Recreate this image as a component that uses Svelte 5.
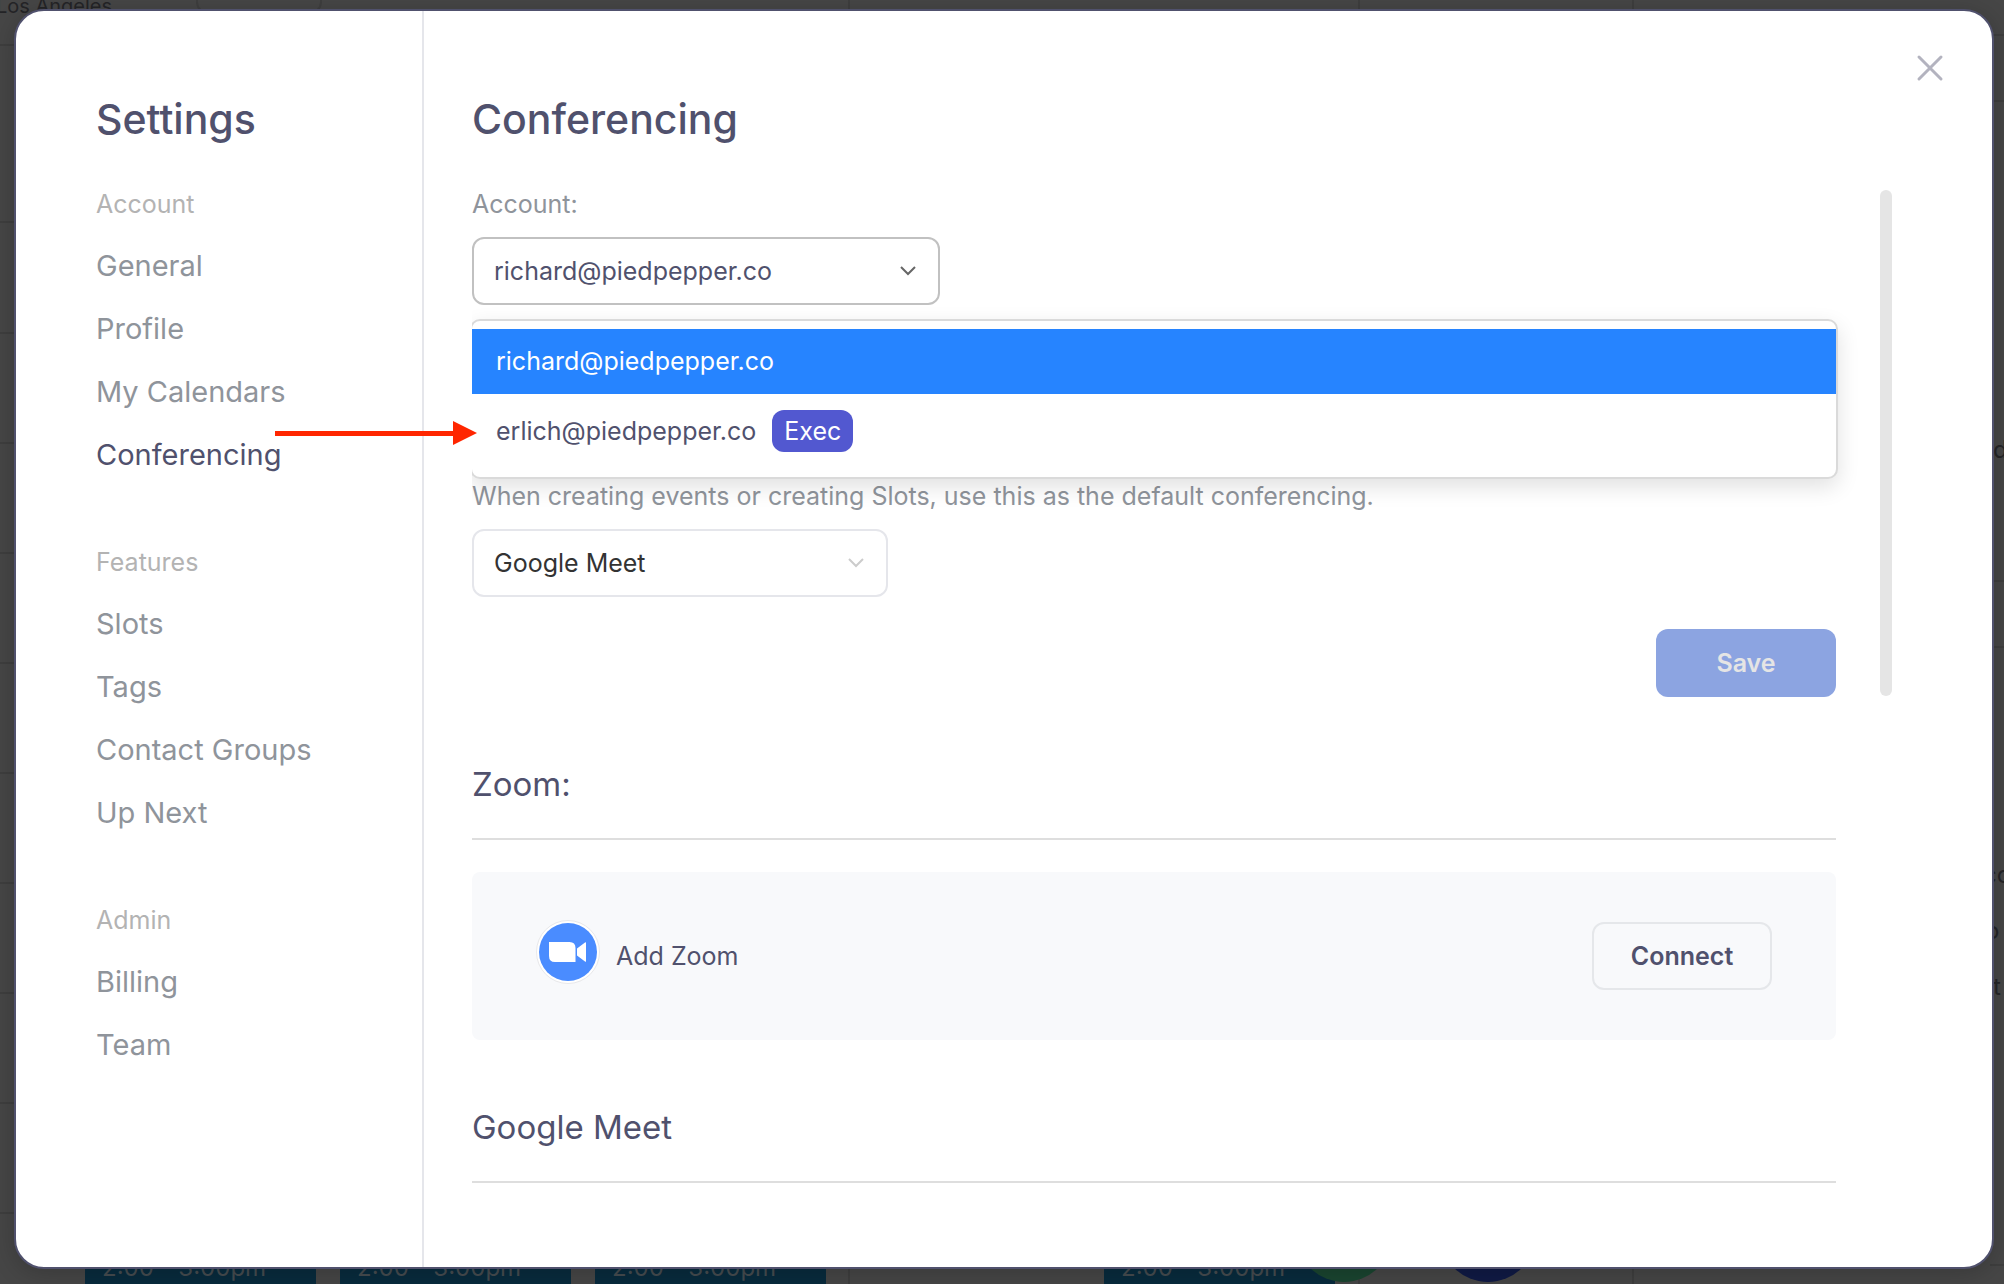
<script>
  const groups = [
    { title: 'Account', items: ['General', 'Profile', 'My Calendars', 'Conferencing'] },
    { title: 'Features', items: ['Slots', 'Tags', 'Contact Groups', 'Up Next'] },
    { title: 'Admin', items: ['Billing', 'Team'] }
  ];
  const slots = [{ x: 85 }, { x: 340 }, { x: 595 }, { x: 1104 }];
  const guests = [
    { x: 1296, color: '#1a4530' },
    { x: 1440, color: '#101a45' }
  ];
  const hours = [44, 221, 332, 442, 552, 662, 772, 882, 992, 1102, 1212];
  const rows = [34, 100, 580, 646, 1264];
  const columns = [848, 1358, 1632];
  const snippets = [
    { x: 1993, y: 434, text: 'd' },
    { x: 1983, y: 859, text: 'co' },
    { x: 1985, y: 915, text: 'o' },
    { x: 1993, y: 971, text: 't' }
  ];
  let active = $state('Conferencing');
  let highlighted = $state(0);
  let conferencing = $state('Google Meet');
</script>

<div class="app">
  <div class="calendar" aria-hidden="true">
    <span class="zone">Los Angeles</span>
    <span class="pill"></span>
    {#each hours as y}<i class="hour" style="top: {y}px"></i>{/each}
    {#each rows as y}<i class="row" style="top: {y}px"></i>{/each}
    {#each columns as x}<i class="column" style="left: {x}px"></i>{/each}
    {#each slots as slot}<span class="slot" style="left: {slot.x}px">2:00 - 3:00pm</span>{/each}
    {#each guests as guest}<i class="guest" style="left: {guest.x}px; background: {guest.color}"></i>{/each}
    {#each snippets as s}<span class="snippet" style="left: {s.x}px; top: {s.y}px">{s.text}</span>{/each}
  </div>

  <div class="modal" role="dialog" aria-label="Settings">
    <aside>
      <h1>Settings</h1>
      <nav>
        {#each groups as group}
          <section>
            <h2>{group.title}</h2>
            {#each group.items as item}
              <a href="#settings" class:active={item === active} onclick={() => (active = item)}>{item}</a>
            {/each}
          </section>
        {/each}
      </nav>
    </aside>

    <main>
      <h1>Conferencing</h1>
      <div class="scroller">
        <div class="settings">
          <label class="label" for="account">Account:</label>
          <div class="picker">
            <button id="account" class="combo" aria-haspopup="listbox" aria-expanded="true">
              <span>richard@piedpepper.co</span>
              <svg width="18" height="12" viewBox="0 0 18 12"><path d="M2 2l7 7 7-7" /></svg>
            </button>
            <div class="menu" role="listbox">
              <button role="option" aria-selected={highlighted === 0} class:on={highlighted === 0} onmouseenter={() => (highlighted = 0)}>richard@piedpepper.co</button>
              <button role="option" class="tall" aria-selected={highlighted === 1} class:on={highlighted === 1} onmouseenter={() => (highlighted = 1)}>erlich@piedpepper.co <span class="tag">Exec</span></button>
            </div>
          </div>
          <label class="label" for="default">When creating events or creating Slots, use this as the default conferencing.</label>
          <div class="select">
            <select id="default" bind:value={conferencing}>
              <option>Google Meet</option>
              <option>Zoom</option>
            </select>
            <svg width="18" height="12" viewBox="0 0 18 12"><path d="M2 2l7 7 7-7" /></svg>
          </div>
          <button class="save">Save</button>
        </div>
        <div class="bar"></div>
      </div>

      <h3>Zoom:</h3>
      <div class="panel">
        <svg class="zoom" width="64" height="64" viewBox="0 0 64 64">
          <circle cx="32" cy="32" r="31.5" fill="#fff" stroke="#e8e8ea" />
          <circle cx="32" cy="32" r="29" fill="#4a8cff" />
          <path fill="#fff" d="M13 22h20.500q6 0 6 6v14h-20.500q-6 0-6-6zM41 28.500l8-6q1-.8 1 .3v18.400q0 1.100-1 .3l-8-6z" />
        </svg>
        <span>Add Zoom</span>
        <button class="connect">Connect</button>
      </div>
      <h3>Google Meet</h3>
    </main>

    <button class="close" aria-label="Close">
      <svg width="28" height="28" viewBox="0 0 28 28"><path d="M3 3l22 22M25 3L3 25" /></svg>
    </button>
  </div>

  <svg class="arrow" width="202" height="24" viewBox="0 0 202 24" aria-hidden="true">
    <path d="M0 10h178V0l24 12-24 12v-9H0z" fill="#ff2600" />
  </svg>
</div>

<style>
  :global(body) {
    margin: 0;
    background: #464646;
  }
  .app {
    position: relative;
    display: flex;
    box-sizing: border-box;
    min-height: 100vh;
    padding: 9px 10px 15px 14px;
    overflow: hidden;
    font-family: Inter, 'Liberation Sans', sans-serif;
    font-size: 25px;
    line-height: 32px;
    color: #50516d;
  }
  button,
  select {
    font: inherit;
    color: inherit;
    cursor: pointer;
  }
  .calendar {
    position: absolute;
    inset: 0;
    overflow: hidden;
    color: #242427;
    font-size: 24px;
  }
  .calendar > * {
    position: absolute;
  }
  .zone {
    left: -4px;
    top: -10px;
    font-size: 20px;
    white-space: nowrap;
  }
  .pill {
    left: 196px;
    top: -40px;
    width: 122px;
    height: 50px;
    border: 2px solid #3e3e3e;
    border-radius: 12px;
  }
  .hour,
  .row {
    left: 0;
    width: 14px;
    height: 2px;
    background: #3e3e3e;
  }
  .row {
    left: auto;
    right: 0;
  }
  .column {
    top: 0;
    bottom: 0;
    width: 2px;
    background: #3e3e3e;
  }
  .slot {
    bottom: 0;
    box-sizing: border-box;
    width: 231px;
    height: 60px;
    padding: 28px 17px 0;
    background: #082b3d;
    color: #464c50;
    white-space: nowrap;
  }
  .guest {
    bottom: 2px;
    width: 96px;
    height: 96px;
    border-radius: 50%;
  }
  .modal {
    position: relative;
    display: grid;
    grid-template-columns: 408px 1fr;
    flex: 1;
    box-sizing: border-box;
    border: 2px solid #50516d;
    border-radius: 30px;
    background: #fff;
    box-shadow: 0 4px 24px rgba(0, 0, 0, 0.2);
  }
  aside {
    padding: 84px 20px 0 80px;
    border-right: 2px solid #e5e6eb;
  }
  h1 {
    margin: 0;
    font-size: 41px;
    font-weight: 500;
    line-height: 48px;
  }
  nav {
    display: flex;
    flex-direction: column;
    gap: 60px;
    padding-top: 45px;
  }
  section {
    display: flex;
    flex-direction: column;
  }
  h2 {
    margin: 0;
    padding: 0 0 14px;
    font-size: 25px;
    font-weight: 400;
    line-height: 32px;
    color: #b3b3b3;
  }
  a {
    color: #8f949b;
    font-size: 29px;
    line-height: 63px;
    text-decoration: none;
    white-space: nowrap;
  }
  a.active {
    color: #50516d;
  }
  main {
    min-width: 0;
    padding: 84px 100px 40px 48px;
  }
  .scroller {
    display: flex;
    justify-content: space-between;
    gap: 44px;
    padding-top: 45px;
  }
  .settings {
    display: flex;
    flex: 1;
    flex-direction: column;
    align-items: flex-start;
  }
  .bar {
    width: 12px;
    margin: 2px 0 1px;
    border-radius: 6px;
    background: #e5e5e5;
  }
  .label {
    color: #8f949b;
  }
  .picker {
    position: relative;
    width: 100%;
    padding: 17px 0 175px;
  }
  .combo {
    display: flex;
    align-items: center;
    justify-content: space-between;
    box-sizing: border-box;
    width: 468px;
    height: 68px;
    padding: 0 21px 0 20px;
    border: 2px solid #c1c1c1;
    border-radius: 12px;
    background: #fff;
  }
  .combo svg,
  .select svg {
    fill: none;
    stroke: #666;
    stroke-width: 2;
  }
  .menu {
    position: absolute;
    top: 99px;
    left: -2px;
    right: -2px;
    z-index: 1;
    display: flex;
    flex-direction: column;
    padding: 8px 0;
    border: 2px solid #dadada;
    border-radius: 10px;
    background: #fff;
    box-shadow: 0 8px 22px rgba(0, 0, 0, 0.12);
    clip-path: inset(-40px -40px -40px 2px);
  }
  .menu button {
    display: flex;
    align-items: center;
    gap: 16px;
    padding: 16px 24px 17px;
    border: 0;
    background: none;
    text-align: left;
  }
  .menu .tall {
    padding-top: 16px;
    padding-bottom: 17px;
  }
  .menu .on {
    background: #2684ff;
    color: #fff;
  }
  .tag {
    padding: 5px 12px;
    border-radius: 12px;
    background: #5258d0;
    color: #fff;
  }
  .select {
    display: grid;
    align-items: center;
    width: 416px;
    margin-top: 17px;
  }
  .select select {
    grid-area: 1 / 1;
    height: 68px;
    padding: 0 20px;
    border: 2px solid #e5e6eb;
    border-radius: 12px;
    background: #fff;
    color: #333;
    appearance: none;
  }
  .select svg {
    grid-area: 1 / 1;
    justify-self: end;
    margin-right: 23px;
    stroke: #ccc;
    pointer-events: none;
  }
  .save,
  .connect {
    box-sizing: border-box;
    width: 180px;
    height: 68px;
    border: 2px solid #e5e7ea;
    border-radius: 12px;
    background: none;
    font-weight: 600;
  }
  .save {
    align-self: flex-end;
    margin-top: 32px;
    border: 0;
    background: #8ca4e1;
    color: #e5e5e5;
  }
  h3 {
    margin: 66px 56px 32px 0;
    padding-bottom: 33px;
    border-bottom: 2px solid #dedede;
    font-size: 33px;
    font-weight: 400;
    line-height: 42px;
  }
  .panel {
    display: flex;
    align-items: center;
    gap: 16px;
    height: 168px;
    margin-right: 56px;
    padding: 0 64px;
    box-sizing: border-box;
    border-radius: 8px;
    background: #f8f9fb;
  }
  .zoom {
    margin-bottom: 8px;
  }
  .connect {
    margin-left: auto;
  }
  .close {
    position: absolute;
    top: 43px;
    right: 48px;
    display: flex;
    padding: 0;
    border: 0;
    background: none;
  }
  .close path {
    fill: none;
    stroke: #b3b3bf;
    stroke-width: 3;
    stroke-linecap: round;
  }
  .arrow {
    position: absolute;
    top: 421px;
    left: 275px;
    z-index: 2;
  }
</style>
